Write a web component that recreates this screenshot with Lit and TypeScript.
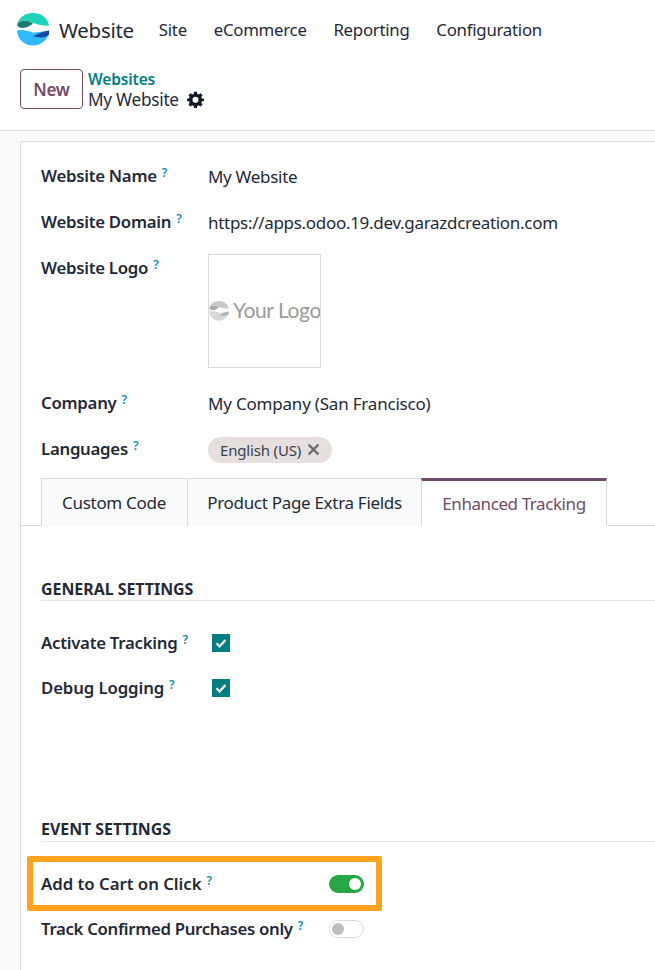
import { LitElement, html, css, svg } from "lit";
import { customElement } from "lit/decorators.js";

const logoMark = (c: string[]) => svg`
  <path d="M0 12C1.500 4.500 8 0 16 0C24 0 30.500 4.500 32 12.700C26 13 21 11.500 16 10L8 7L2 9Z" fill="${c[0]}"/>
  <path d="M0 12C1 9 4 7.400 8 7.400C11 7.400 13.500 9 16 10.700C12 13.500 9 15 5 15C3 15 1 14 0 12Z" fill="${c[1]}"/>
  <path d="M0 17.400C5 16.500 11 17.500 16 19.500C21 19.500 27 18 32 17.400C31.500 27 24 32.400 16 32.400C8 32.400 .5 27 0 17.400Z" fill="${c[2]}"/>
  <path d="M16 23.400C21 20.500 26 18.500 32 17.400L32 21.700C30 23.500 27.500 24.400 25 24.400C22 24.400 19 24 16 23.400Z" fill="${c[3]}"/>
`;

const gear = html`<svg class="gear" viewBox="0 0 24 24"><path fill-rule="evenodd" d="M10 1h4l.6 3.100 1.900.8L19.200 3.100l2.800 2.800-1.800 2.700.8 1.900L24 11v3l-3 .6-.8 1.900 1.800 2.700-2.800 2.800-2.700-1.800-1.900.8L14 24h-4l-.6-3-1.900-.8-2.700 1.800L2 19.200l1.800-2.700-.8-1.900L0 14v-3l3-.6.8-1.900L2 5.900l2.800-2.800 2.700 1.800 1.900-.8ZM12 8.200a4.300 4.300 0 1 0 0 8.600 4.300 4.300 0 0 0 0-8.600Z"/></svg>`;

const check = html`<svg viewBox="0 0 18 18"><path d="M4.500 9.200 7.600 12.300 13.500 6" fill="none" stroke="#fff" stroke-width="2.200"/></svg>`;

@customElement("app-root")
export class AppRoot extends LitElement {
  static styles = css`
    :host {
      display: block;
      width: 655px;
      height: 970px;
      overflow: hidden;
      background: #f9fafb;
      color: #1f2937;
      font-family: "Noto Sans", "Open Sans", sans-serif;
      font-size: 17px;
    }
    header {
      background: #fff;
      height: 130px;
      border-bottom: 1px solid #d8dadd;
    }
    nav {
      display: flex;
      align-items: center;
      height: 59px;
      padding-left: 17px;
    }
    .mark { width: 32px; height: 33px; margin-right: 10px; }
    .brand { font-size: 20.500px; color: #1f2937; margin-right: 25px; letter-spacing: -0.3px; }
    .menu { font-size: 16.800px; margin-right: 26.800px; letter-spacing: -0.25px; color: #1f2937; }
    .panel { display: flex; align-items: flex-start; padding: 10px 0 0 20px; gap: 5px; }
    .new {
      box-sizing: border-box;
      width: 63px; height: 40px;
      border: 1px solid #714b67;
      border-radius: 4px;
      color: #714b67;
      font-weight: 600;
      font-size: 17px;
      letter-spacing: -0.2px;
      display: flex; align-items: center; justify-content: center;
    }
    .crumb { display: flex; flex-direction: column; line-height: 21px; }
    .crumb b { color: #017e84; font-weight: 600; font-size: 15.500px; letter-spacing: -0.15px; line-height: 20px; }
    .crumb span { display: flex; align-items: center; gap: 8px; font-size: 17.200px; letter-spacing: -0.25px; }
    .gear { width: 17px; height: 17px; fill: #111827; }
    .sheet {
      margin: 10px 0 0 20px;
      background: #fff;
      border: 1px solid #d8dadd;
      border-right: 0;
      border-bottom: 0;
      border-radius: 3px 0 0 0;
      height: 830px;
      position: relative;
    }
    .form { padding: 12px 0 0 20px; }
    .row { display: grid; grid-template-columns: 167px 1fr; height: 46px; align-items: start; }
    .row.short { height: 45px; }
    .label { font-weight: 600; font-size: 16.800px; letter-spacing: -0.27px; color: #1f2937; white-space: nowrap; }
    .row .label { line-height: 44px; }
    .row .val { line-height: 46px; }
    .val { font-size: 17px; letter-spacing: -0.3px; white-space: nowrap; }
    .val.wide { letter-spacing: -0.2px; }
    sup { font-size: 12px; color: #0f8fb0; font-weight: 600; line-height: 0; margin-left: 5px; vertical-align: 5px; letter-spacing: 0; }
    .row.logoRow { height: 135px; }
    .logo {
      box-sizing: border-box;
      margin-top: 8px;
      width: 113px; height: 114px;
      border: 1px solid #d8dadd;
      display: flex; align-items: center;
      overflow: hidden;
      color: #9a9a9a;
      font-family: Lato, sans-serif;
      font-size: 21px;
      letter-spacing: -0.4px;
      white-space: nowrap;
    }
    .logo svg { width: 20px; height: 20px; flex: none; margin: 0 4px 0 0; }
    .logo span { margin-top: -3px; }
    .tag {
      display: inline-flex; align-items: center;
      height: 26px; margin-top: 10px; padding: 0 12px;
      gap: 6px;
      background: #e7dfdd;
      border-radius: 13px;
      font-size: 15px;
      letter-spacing: -0.17px;
      color: #374151;
      line-height: 26px;
    }
    .tag svg { width: 13px; height: 13px; margin-top: -2px; }
    .tabs {
      display: flex;
      height: 47px;
      margin-top: 6px;
      padding-left: 20px;
      border-bottom: 1px solid #d8dadd;
    }
    .tab {
      box-sizing: border-box;
      height: 48px;
      display: flex; align-items: center; justify-content: center;
      background: #f9fafb;
      border: 1px solid #d8dadd;
      border-bottom: 0;
      margin-left: -1px;
      font-size: 17px;
      letter-spacing: -0.3px;
      color: #1f2937;
    }
    .tab:first-child { margin-left: 0; }
    .tab.active {
      background: #fff;
      border-top: 3px solid #714b67;
      color: #714b67;
      letter-spacing: -0.42px;
    }
    .tab.w1 { width: 147px; padding-right: 1px; }
    .tab.w2 { width: 235px; }
    .tab.w3 { width: 186px; }
    .pane { padding: 0 0 0 20px; }
    h3 {
      margin: 0;
      font-weight: 700;
      font-size: 15.900px;
      color: #1f2937;
      line-height: 24px;
      border-bottom: 1px solid #e5e7eb;
    }
    .h1 { margin-top: 51px; height: 23px; }
    .h2 { margin-top: 107px; height: 24px; }
    .check { display: grid; grid-template-columns: 171px 1fr; height: 45px; align-items: center; }
    .checks { margin-top: 19px; }
    .check .label, .toggle .label { line-height: 45px; height: 45px; }
    .box { width: 18px; height: 18px; background: #017e84; display: block; }
    .box svg { display: block; }
    .toggles { margin-top: 19px; position: relative; }
    .toggle { display: grid; grid-template-columns: 288px 1fr; height: 45px; align-items: center; }
    .check .label.loose2 { letter-spacing: -0.12px; }
    .toggle .label.loose { letter-spacing: -0.03px; }
    .toggle .label.tight { letter-spacing: -0.33px; }
    .sw {
      box-sizing: border-box;
      width: 35px; height: 18px;
      border-radius: 9px;
      display: flex; align-items: center;
      padding: 0 3px;
    }
    .sw.on { background: #28a745; justify-content: flex-end; }
    .sw.off { background: #fff; border: 1px solid #d8dadd; padding: 0 2px; }
    .sw i { width: 12px; height: 12px; border-radius: 50%; display: block; }
    .sw.on i { background: #fff; }
    .sw.off i { background: #bdbdbd; }
    .highlight {
      position: absolute;
      left: -14px; top: -5px;
      width: 355px; height: 55px;
      box-sizing: border-box;
      border: 6px solid #ffa31f;
      border-radius: 2px;
      pointer-events: none;
    }
  `;

  render() {
    return html`
      <header>
        <nav>
          <svg class="mark" viewBox="0 0 32 33">${logoMark(["#1ed3b8", "#1f7a6e", "#2fbaff", "#1a4aa0"])}</svg>
          <span class="brand">Website</span>
          <span class="menu">Site</span>
          <span class="menu">eCommerce</span>
          <span class="menu">Reporting</span>
          <span class="menu">Configuration</span>
        </nav>
        <div class="panel">
          <div class="new">New</div>
          <div class="crumb">
            <b>Websites</b>
            <span>My Website ${gear}</span>
          </div>
        </div>
      </header>
      <div class="sheet">
        <div class="form">
          <div class="row"><div class="label">Website Name<sup>?</sup></div><div class="val">My Website</div></div>
          <div class="row"><div class="label">Website Domain<sup>?</sup></div><div class="val">https://apps.odoo.19.dev.garazdcreation.com</div></div>
          <div class="row logoRow"><div class="label">Website Logo<sup>?</sup></div>
            <div class="logo">
              <svg viewBox="0 0 32 33">${logoMark(["#c9c9c9", "#a9a9a9", "#d8d8d8", "#b4b4b4"])}</svg>
              <span>Your Logo</span>
            </div>
          </div>
          <div class="row"><div class="label">Company<sup>?</sup></div><div class="val wide">My Company (San Francisco)</div></div>
          <div class="row short"><div class="label">Languages<sup>?</sup></div><div class="val">
            <span class="tag">English (US)
              <svg viewBox="0 0 12 12"><path d="M1.500 1.500l9 9M10.500 1.500l-9 9" stroke="#6b6b6b" stroke-width="2" fill="none"/></svg>
            </span></div></div>
        </div>
        <div class="tabs">
          <div class="tab w1">Custom Code</div>
          <div class="tab w2">Product Page Extra Fields</div>
          <div class="tab w3 active">Enhanced Tracking</div>
        </div>
        <div class="pane">
          <h3 class="h1">GENERAL SETTINGS</h3>
          <div class="checks">
            <div class="check"><div class="label">Activate Tracking<sup>?</sup></div><span class="box">${check}</span></div>
            <div class="check"><div class="label loose2">Debug Logging<sup>?</sup></div><span class="box">${check}</span></div>
          </div>
          <h3 class="h2">EVENT SETTINGS</h3>
          <div class="toggles">
            <div class="highlight"></div>
            <div class="toggle"><div class="label loose">Add to Cart on Click<sup>?</sup></div><span class="sw on"><i></i></span></div>
            <div class="toggle"><div class="label tight">Track Confirmed Purchases only<sup>?</sup></div><span class="sw off"><i></i></span></div>
          </div>
        </div>
      </div>
    `;
  }
}
